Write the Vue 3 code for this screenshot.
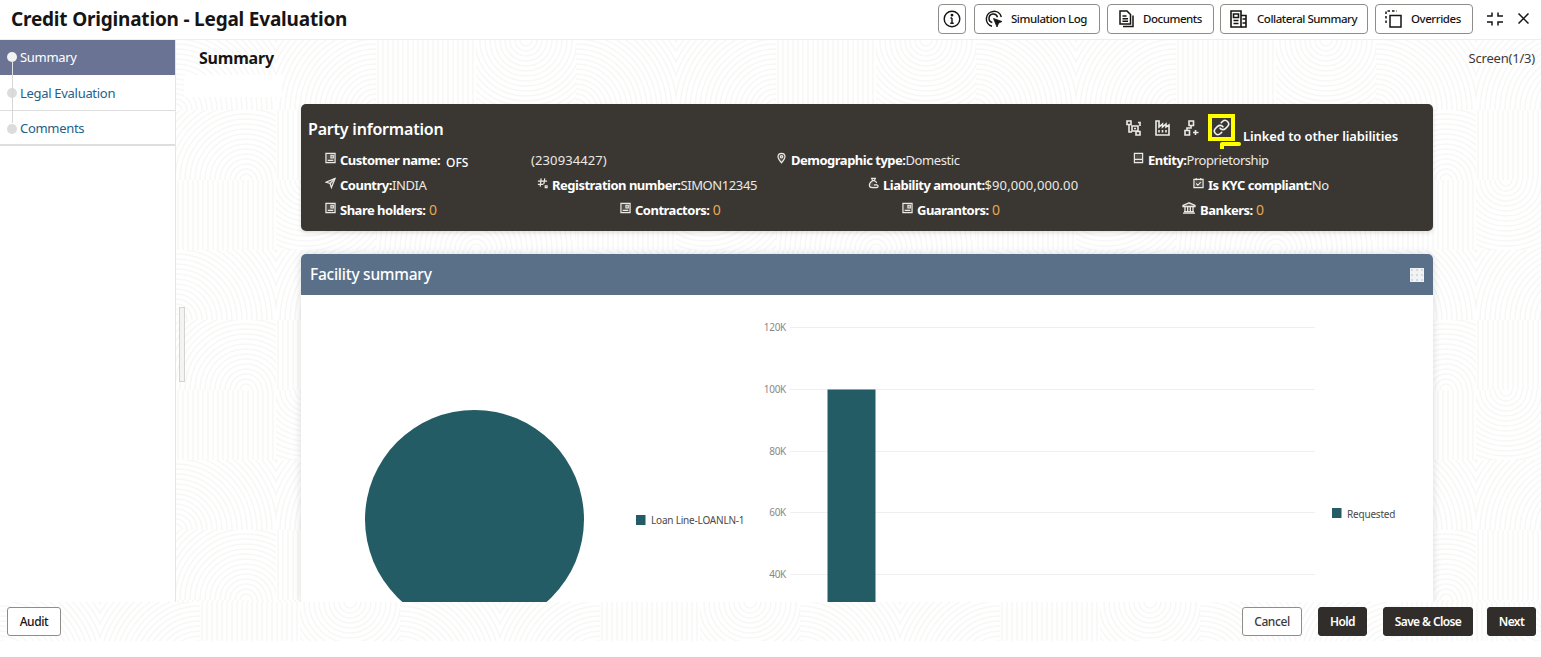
<template>
  <div class="page">
    <header class="topbar">
      <h1>Credit Origination - Legal Evaluation</h1>
      <div class="top-actions">
        <button class="tbtn info-btn" aria-label="Info">
          <svg width="18" height="18" viewBox="0 0 18 18" fill="none" stroke="#161513" stroke-width="1.4"><circle cx="9" cy="9" r="7.8"/><path d="M9 8v5M7.300 13.200h3.400M7.500 8H9"/><circle cx="9" cy="5.200" r=".7" fill="#161513"/></svg>
        </button>
        <button class="tbtn log">
          <svg width="18" height="18" viewBox="0 0 18 18" fill="none" stroke="#161513" stroke-width="1.500"><path d="M7 16.300A7.600 7.600 0 1 1 16.300 7"/><path d="M7.300 12.500a4.300 4.300 0 1 1 5.200-5.200"/><path d="M8.500 8.500l8.500 3-3.400 1.600L12 17z" fill="#161513" stroke-width=".8"/></svg>
          Simulation Log
        </button>
        <button class="tbtn docs">
          <svg width="15" height="18" viewBox="0 0 15 18" fill="none" stroke="#161513" stroke-width="1.500"><path d="M1 1h7l3.500 3.500V14H1z"/><path d="M3.500 6h4M3.500 8.700h5.500M3.500 11.300h5.500"/><path d="M14 5.500V16.500H4"/></svg>
          Documents
        </button>
        <button class="tbtn coll">
          <svg width="17" height="18" viewBox="0 0 17 18" fill="none" stroke="#161513" stroke-width="1.600"><path d="M1 1h10v16H1z"/><path d="M3.500 4h5v3.500h-5zM3.500 10.500h5M3.500 13.500h5"/><path d="M11 5.500h5V17h-5M12.500 9h3.500M12.500 13h3.500"/></svg>
          Collateral Summary
        </button>
        <button class="tbtn over">
          <svg width="17" height="18" viewBox="0 0 17 18" fill="none" stroke="#161513" stroke-width="1.500"><path d="M5 5.500h11v11.500H5z"/><path d="M1 13V1h11" stroke-dasharray="2.500 2"/></svg>
          Overrides
        </button>
        <svg class="expand" width="18" height="18" viewBox="0 0 18 18" fill="none" stroke="#161513" stroke-width="1.500"><path d="M6 2.500V6H1M12 2.500V6h5M6 15.500V12H1M12 15.500V12h5"/></svg>
        <svg class="close" width="11" height="11" viewBox="0 0 11 11" fill="none" stroke="#161513" stroke-width="1.500"><path d="M.5.500l10 10M10.500.500l-10 10"/></svg>
      </div>
    </header>

    <div class="middle">
      <nav class="sidebar">
        <div
          v-for="(step, i) in steps"
          :key="step"
          class="step"
          :class="[{ active: i === 0 }, 'step' + i]"
        >
          <span class="dot"></span>
          <span class="line" :class="'line' + i"></span>
          {{ step }}
        </div>
      </nav>

      <main class="content pattern" :style="{ backgroundImage: patternUrl }">
        <span class="splitter"></span>
        <div class="title-row">
          <h2>Summary</h2>
          <span class="screen">Screen(1/3)</span>
        </div>
        <div class="patch"></div>

        <section class="party">
          <div class="party-head">
            <h3>Party information</h3>
            <div class="party-icons">
              <svg width="15" height="16" viewBox="0 0 15 16" fill="none" stroke="#ecebe7" stroke-width="1.600"><path d="M1 1h4v3.500H1zM10 11.500h4V15h-4zM6 6h6v5H6zM3 4.500V12h3M12 2.500h2V6"/><path d="M8 8.500h2"/></svg>
              <svg width="15" height="16" viewBox="0 0 15 16" fill="none" stroke="#ecebe7" stroke-width="1.600"><path d="M1 15V1h3v6l3.500-3v3L11 4v3l3-2v10z"/><path d="M4 10v2.500M7.500 10v2.500M11 10v2.500"/></svg>
              <svg width="15" height="16" viewBox="0 0 15 16" fill="none" stroke="#ecebe7" stroke-width="1.600"><path d="M5 1h4.500v4.500H5zM1 10.500h4.500V15H1zM7 5.500V8H3v2.500M11.500 10v5M9 12.500h5.500"/></svg>
              <svg width="17" height="17" viewBox="0 0 24 24" fill="none" stroke="#f4f3ef" stroke-width="2.200" stroke-linecap="round"><path d="M10 13a5 5 0 0 0 7.540.54l3-3a5 5 0 0 0-7.070-7.070l-1.720 1.710"/><path d="M14 11a5 5 0 0 0-7.540-.54l-3 3a5 5 0 0 0 7.070 7.070l1.710-1.710"/></svg>
            </div>
          </div>
          <span class="mark-box"></span>
          <span class="mark-line"></span>
          <span class="linked">Linked to other liabilities</span>

          <div class="info-row r1">
            <div class="info">
              <svg class="ic" viewBox="0 0 12 12"><path d="M1 1h10v10H1z"/><path d="M6.500 3H9v3H6.500z M3 8.500h6"/></svg>
              <b>Customer name:</b>
              <span class="ofs">OFS</span>
              <span class="digits">(230934427)</span>
            </div>
            <div class="info">
              <svg class="ic" viewBox="0 0 12 12"><path d="M6 11.200C3.600 8.500 2.200 6.600 2.200 4.700a3.800 3.800 0 0 1 7.600 0c0 1.900-1.400 3.800-3.800 6.500z"/><circle cx="6" cy="4.700" r="1.300"/></svg>
              <b>Demographic type:</b><span class="val">Domestic</span>
            </div>
            <div class="info">
              <svg class="ic" viewBox="0 0 12 12"><path d="M1.500 1h9v10h-9zM1.500 7.500h9"/></svg>
              <b>Entity:</b><span class="val tight">Proprietorship</span>
            </div>
          </div>

          <div class="info-row r2">
            <div class="info">
              <svg class="ic" viewBox="0 0 12 12"><path d="M11 1L1 5.200l4.500 1.300L7 11z"/><path d="M11 1L5.500 6.500"/></svg>
              <b>Country:</b><span class="val">INDIA</span>
            </div>
            <div class="info">
              <svg class="ic" viewBox="0 0 12 12"><path d="M4.500 1L3.500 10M8.500 1L7.500 7M1 4h10M1 7.500h6M9 9h2v2H9z"/></svg>
              <b>Registration number:</b><span class="val">SIMON12345</span>
            </div>
            <div class="info">
              <svg class="ic" viewBox="0 0 12 12"><path d="M4 1h4L7 3.500H5zM5 3.500C2 5 1.500 7 1.500 8.500c0 1.500 1 2.500 3 2.500h5c1.200 0 1.500-.8 1.500-1.500S10.500 8 9.500 8h-3"/><path d="M7 3.500c1.200.6 2 1.500 2.500 2.500"/></svg>
              <b>Liability amount:</b><span class="digits">$90,000,000.00</span>
            </div>
            <div class="info">
              <svg class="ic" viewBox="0 0 12 12"><path d="M1 2h10v9H1zM3.500.500v2.500M8.500.500v2.500M3.500 6.500l1.800 1.800L8.500 5"/></svg>
              <b>Is KYC compliant:</b><span class="val">No</span>
            </div>
          </div>

          <div class="info-row r3">
            <div class="info" v-for="c in counts" :key="c.label">
              <svg v-if="c.label !== 'Bankers'" class="ic" viewBox="0 0 12 12"><path d="M1 1h10v10H1z"/><path d="M6.500 3H9v3H6.500z M3 8.500h6"/></svg>
              <svg v-else class="ic bank" viewBox="0 0 14 12"><path d="M7 .8L1 3.500v1h12v-1zM1 11.200h12M2 9.700h10M3 5v4M5.700 5v4M8.300 5v4M11 5v4"/></svg>
              <b>{{ c.label }}:</b>&nbsp;<span class="num">0</span>
            </div>
          </div>
        </section>

        <section class="facility">
          <div class="facility-head">
            <h3>Facility summary</h3>
            <span class="grid-ic">
              <i v-for="n in 9" :key="n"></i>
            </span>
          </div>
          <svg class="chart" width="1132" height="307" viewBox="0 0 1132 307">
            <circle cx="173.500" cy="224.500" r="109.500" fill="#235c64" />
            <rect x="335" y="220" width="9.500" height="10" fill="#235c64" />
            <text x="350" y="229" class="leg">Loan Line-LOANLN-1</text>

            <g v-for="t in ticks" :key="t.label">
              <line x1="489" x2="1014" :y1="t.y" :y2="t.y" stroke="#efefef" />
              <text x="485" :y="t.y + 3.500" text-anchor="end" class="tick">{{ t.label }}</text>
            </g>
            <rect x="526.500" y="94.500" width="48" height="220" fill="#235c64" />
            <rect x="1031" y="213" width="9.500" height="10" fill="#235c64" />
            <text x="1046" y="223" class="leg">Requested</text>
          </svg>
        </section>
      </main>
    </div>

    <footer class="footer pattern" :style="{ backgroundImage: patternUrl }">
      <button class="fbtn audit">Audit</button>
      <div class="footer-right">
        <button class="fbtn cancel">Cancel</button>
        <button class="fbtn dark hold">Hold</button>
        <button class="fbtn dark save">Save &amp; Close</button>
        <button class="fbtn dark next">Next</button>
      </div>
    </footer>
    <div class="bottom-gap"></div>
  </div>
</template>

<script setup>
const steps = ['Summary', 'Legal Evaluation', 'Comments']

const counts = [
  { label: 'Share holders' },
  { label: 'Contractors' },
  { label: 'Guarantors' },
  { label: 'Bankers' }
]

const ticks = [
  { label: '120K', y: 32.5 },
  { label: '100K', y: 94.5 },
  { label: '80K', y: 156.5 },
  { label: '60K', y: 217.5 },
  { label: '40K', y: 279.5 }
]

// faint fingerprint backdrop: a patchwork of arc and stripe cells
const CELL_W = 100
const CELL_H = 70
const cells = [
  [0, 70], [100, 70], 'v', [50, 0],
  [70, 70], 'v', [0, 0], [100, 30],
  'v', [30, 0], [100, 70], [0, 70]
]

function cellMarkup(cell, i) {
  const x = (i % 4) * CELL_W
  const y = Math.floor(i / 4) * CELL_H
  let shapes = ''
  if (cell === 'v') {
    for (let p = 2; p < CELL_W; p += 5) {
      shapes += `<line x1="${p}" x2="${p}" y1="0" y2="${CELL_H}"/>`
    }
  } else {
    for (let r = 6; r < 130; r += 5) {
      shapes += `<circle cx="${cell[0]}" cy="${cell[1]}" r="${r}"/>`
    }
  }
  return `<svg x="${x}" y="${y}" width="${CELL_W}" height="${CELL_H}">${shapes}</svg>`
}

const tile = `<svg xmlns="http://www.w3.org/2000/svg" width="400" height="210" fill="none" stroke="#f7f7f6" stroke-width="1.5">${cells.map(cellMarkup).join('')}</svg>`
const patternUrl = `url("data:image/svg+xml,${encodeURIComponent(tile)}")`
</script>

<style>
html, body {
  margin: 0;
  background: #fff;
}
</style>

<style scoped>
.page {
  width: 1541px;
  height: 657px;
  display: flex;
  flex-direction: column;
  overflow: hidden;
  font-family: "Noto Sans", "Liberation Sans", sans-serif;
  color: #161513;
  background: #fff;
}

.pattern {
  background-color: #fff;
}

.topbar {
  height: 39px;
  flex: none;
  display: flex;
  align-items: center;
  justify-content: space-between;
  padding-left: 11px;
  border-bottom: 1px solid #eeeeec;
}

h1 {
  margin: 0 0 1px;
  font-size: 19px;
  font-weight: 700;
  letter-spacing: -0.2px;
}

.top-actions {
  display: flex;
  align-items: center;
  margin-bottom: 2px;
}

.tbtn {
  height: 30px;
  box-sizing: border-box;
  display: flex;
  align-items: center;
  padding: 0;
  background: #fff;
  border: 1px solid #8f8d89;
  border-radius: 4px;
  font: 500 11.5px "Noto Sans", sans-serif;
  letter-spacing: -0.45px;
  color: #161513;
  white-space: nowrap;
}

.tbtn svg {
  flex: none;
}

.info-btn { width: 28px; padding-left: 4px; margin-right: 8px; }
.log { width: 126px; padding-left: 10px; gap: 8px; margin-right: 7px; }
.docs { width: 107px; padding-left: 11px; gap: 9px; margin-right: 6px; }
.coll { width: 148px; padding-left: 9px; gap: 10px; margin-right: 7px; }
.over { width: 98px; padding-left: 9px; gap: 9px; margin-right: 13px; }
.expand { margin-right: 14px; flex: none; }
.close { margin-right: 12px; flex: none; }

.middle {
  height: 562px;
  flex: none;
  display: flex;
}

.sidebar {
  width: 175px;
  flex: none;
  border-right: 1px solid #e6e6e4;
  background: #fff;
}

.step {
  position: relative;
  height: 36px;
  box-sizing: border-box;
  padding-left: 20px;
  display: flex;
  align-items: center;
  font-size: 13px;
  letter-spacing: -0.3px;
  color: #22618a;
  border-bottom: 1px solid #dedede;
}

.step.active {
  height: 35px;
  padding-bottom: 2px;
  background: #6b7394;
  color: #fff;
  border-bottom: none;
}

.step2 {
  height: 35px;
  border-bottom-width: 2px;
}

.dot {
  position: absolute;
  left: 7px;
  top: 13px;
  width: 10px;
  height: 10px;
  border-radius: 50%;
  background: #dcdcda;
}

.active .dot {
  top: 12px;
  background: #f2f2f2;
}

.line {
  position: absolute;
  left: 12px;
  width: 1px;
  background: #d6d6d6;
}

.line0 { top: 22px; height: 13px; background: #e4e4e4; }
.line1 { top: 0; height: 36px; }
.line2 { top: 0; height: 12px; }

.content {
  position: relative;
  flex: 1;
  min-width: 0;
  overflow: hidden;
  padding: 0 108px 0 125px;
}

.splitter {
  position: absolute;
  left: 3px;
  top: 267px;
  width: 4px;
  height: 73px;
  border: 1px solid #d4d4d2;
  background: #f4f4f3;
}

.title-row {
  display: flex;
  justify-content: space-between;
  align-items: center;
  height: 35px;
  margin: 0 -108px 0 -102px;
  padding-right: 6px;
}

h2 {
  margin: 0;
  font-size: 16px;
  font-weight: 700;
  letter-spacing: -0.2px;
}

.screen {
  font-size: 13px;
  letter-spacing: -0.2px;
  color: #3c3a37;
}

.patch {
  position: absolute;
  left: 8px;
  top: 35px;
  width: 98px;
  height: 22px;
  background: #fff;
}

.party {
  position: relative;
  height: 127px;
  margin-top: 29px;
  box-sizing: border-box;
  padding: 0 0 0 7px;
  background: #3a3733;
  border-radius: 5px;
  box-shadow: 0 2px 4px rgba(0, 0, 0, 0.12);
  color: #fff;
  font-size: 13px;
}

.party-head {
  height: 43px;
  display: flex;
  align-items: flex-start;
  justify-content: space-between;
}

h3 {
  margin: 0;
  font-size: 16px;
  font-weight: 600;
  letter-spacing: -0.2px;
}

.party-head h3 {
  margin-top: 14px;
}

.party-icons {
  display: flex;
  align-items: center;
  gap: 14px;
  margin: 15px 203px 0 0;
}

.mark-box {
  position: absolute;
  left: 907px;
  top: 10px;
  width: 27px;
  height: 27px;
  box-sizing: border-box;
  border: 4px solid #ffff00;
}

.mark-line {
  position: absolute;
  left: 919px;
  top: 38px;
  width: 21px;
  height: 4px;
  border-radius: 2px;
  background: #ffff00;
}

.mark-line::after {
  content: "";
  position: absolute;
  left: 0;
  top: 2px;
  width: 4px;
  height: 5px;
  background: #ffff00;
}

.linked {
  position: absolute;
  left: 942px;
  top: 23px;
  font-size: 13px;
  font-weight: 600;
  letter-spacing: -0.1px;
}

.info-row {
  display: grid;
  height: 25px;
  padding-left: 17px;
  align-items: center;
}

.r1 { grid-template-columns: 451px 357px 1fr; }
.r2 { grid-template-columns: 212px 331px 325px 1fr; }
.r3 { grid-template-columns: 295px 282px 280px 1fr; }

.info {
  display: flex;
  align-items: center;
  white-space: nowrap;
  color: #ece9e4;
}

.info b {
  font-weight: 700;
  color: #fff;
  letter-spacing: -0.5px;
}

.val {
  letter-spacing: -0.4px;
}

.val.tight {
  letter-spacing: -0.45px;
}

.digits {
  letter-spacing: 0.1px;
}

.ic {
  width: 11px;
  height: 12px;
  margin-right: 4px;
  margin-bottom: 3px;
  fill: rgba(255, 255, 255, 0.12);
  stroke: #ece9e4;
  stroke-width: 1.3;
  flex: none;
}

.ic.bank { width: 14px; }

.ofs {
  margin: 5px 0 0 6px;
  width: 85px;
  flex: none;
  font-size: 12px;
  font-weight: 500;
  color: #fff;
}

.num {
  font-size: 14px;
  color: #e6a855;
}

.facility {
  margin-top: 23px;
  background: #fff;
  border-radius: 5px 5px 0 0;
  box-shadow: 0 0 8px rgba(0, 0, 0, 0.14);
}

.facility-head {
  height: 41px;
  display: flex;
  align-items: center;
  justify-content: space-between;
  padding: 0 9px;
  background: #5a7089;
  border-radius: 5px 5px 0 0;
  color: #fff;
}

.facility-head h3 {
  font-size: 15.5px;
  font-weight: 500;
  letter-spacing: -0.25px;
  margin-bottom: 2px;
}

.grid-ic {
  width: 14px;
  height: 14px;
  display: grid;
  grid-template-columns: repeat(3, 1fr);
  gap: 1px;
  background: #f0f2f4;
}

.grid-ic i {
  background: #d4d9de;
  margin: 1px;
}

.chart {
  display: block;
}

.leg {
  font: 10px "Noto Sans", sans-serif;
  letter-spacing: -0.2px;
  fill: #4a4845;
}

.tick {
  font: 10px "Noto Sans", sans-serif;
  letter-spacing: -0.3px;
  fill: #8a8885;
}

.footer {
  height: 39px;
  flex: none;
  display: flex;
  justify-content: space-between;
  align-items: flex-start;
  padding: 5px 5px 0 7px;
  box-sizing: border-box;
}

.footer-right {
  display: flex;
}

.fbtn {
  height: 29px;
  padding: 0;
  box-sizing: border-box;
  border-radius: 3px;
  font: 500 12px "Noto Sans", sans-serif;
  letter-spacing: -0.4px;
  border: 1px solid #8f8d89;
  background: #fff;
  color: #161513;
}

.audit { width: 54px; }
.cancel { width: 60px; margin-right: 16px; color: #3c3a37; }

.dark {
  background: #312d2a;
  border-color: #312d2a;
  color: #fff;
  font-weight: 600;
  letter-spacing: -0.6px;
}

.hold { width: 49px; margin-right: 16px; }
.save { width: 90px; margin-right: 14px; }
.next { width: 49px; }

.bottom-gap {
  flex: 1;
  background: #fff;
}
</style>
